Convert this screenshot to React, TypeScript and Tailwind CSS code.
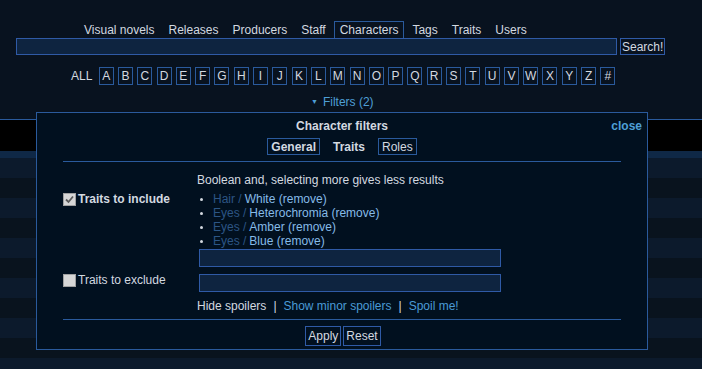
const navItems = ["Visual novels", "Releases", "Producers", "Staff", "Characters", "Tags", "Traits", "Users"];
const letters = "ABCDEFGHIJKLMNOPQRSTUVWXYZ#".split("");
const traits = [
  { group: "Hair", name: "White" },
  { group: "Eyes", name: "Heterochromia" },
  { group: "Eyes", name: "Amber" },
  { group: "Eyes", name: "Blue" },
];

function Check({ checked }: { checked?: boolean }) {
  return (
    <span className="w-[13px] h-[13px] mr-[2px] bg-[#d6d6d6] border border-[#a0a0a0] inline-flex items-center justify-center">
      {checked && (
        <svg width="9" height="9" viewBox="0 0 9 9">
          <path d="M1 4.5 L3.5 7 L8 1.5" stroke="#5a5a5a" strokeWidth="1.8" fill="none" />
        </svg>
      )}
    </span>
  );
}

export default function App() {
  return (
    <div className="relative w-[702px] h-[369px] overflow-hidden bg-[#08121f] text-[#d3d9e0] text-[12px] leading-[14px] font-['Liberation_Sans',Arial,sans-serif]">
      {/* top nav */}
      <div className="pt-[21px] pl-[78px] flex gap-[2px]">
        {navItems.map((n) => (
          <span
            key={n}
            className={
              "h-[18px] px-[5px] flex items-center border " +
              (n === "Characters" ? "border-[#2a5a9c]" : "border-transparent")
            }
          >
            {n}
          </span>
        ))}
      </div>

      {/* search */}
      <div className="flex pl-[16px] gap-[3px] -mt-[1px]">
        <div className="w-[601px] h-[17px] bg-[#0e2440] border border-[#2f5aa6]" />
        <span className="h-[17px] px-[1px] flex items-center border border-[#2f5aa6] text-[12px]">Search!</span>
      </div>

      {/* letters */}
      <div className="flex items-center pl-[71px] mt-[12px] gap-[4.3px]">
        <span className="mr-[2px]">ALL</span>
        {letters.map((l) => (
          <span key={l} className="w-[15px] h-[18px] border border-[#2a5a9c] flex items-center justify-center">
            {l}
          </span>
        ))}
      </div>

      {/* filters toggle */}
      <div className="mt-[10px] flex items-center pl-[311px] text-[#4e9fd6]">
        <span className="text-[7px] mr-[5px]">▼</span>
        <span>Filters (2)</span>
      </div>

      {/* results table behind */}
      <div className="mt-[10px] border-t border-[#2a5a9c] h-[32px] bg-black" />
      <div className="h-[7px] bg-[#0f2846]" />
      <div className="flex flex-col">
        {Array.from({ length: 11 }).map((_, i) => (
          <div key={i} className={"h-[20px] " + (i % 2 === 0 ? "bg-[#0c1a2c]" : "bg-[#09131e]")} />
        ))}
      </div>

      {/* filter panel */}
      <div className="absolute left-[36px] top-[112px] w-[612px] h-[238px] bg-[#01101f] border border-[#2a5a9c] px-[26px]">
        <div className="relative text-center font-bold pt-[6px]">
          Character filters
          <span className="absolute right-[-21px] top-[6px] text-[#4e9fd6]">close</span>
        </div>
        <div className="flex justify-center gap-[6px] mt-[5px] font-bold">
          <span className="h-[17px] px-[3px] flex items-center border border-[#2a5a9c]">General</span>
          <span className="h-[17px] px-[6px] flex items-center border border-transparent">Traits</span>
          <span className="h-[17px] px-[3px] flex items-center border border-[#2a5a9c] font-normal">Roles</span>
        </div>
        <div className="mt-[6px] border-t border-[#2a5a9c]" />

        <div className="flex mt-[11px]">
          <div className="w-[134px] flex flex-col">
            <div className="h-[14px]" />
            <div className="flex items-center font-bold h-[14px] mt-[5px]">
              <Check checked />
              Traits to include
            </div>
            <div className="flex items-center h-[14px] mt-[67px]">
              <Check />
              Traits to exclude
            </div>
          </div>
          <div className="flex flex-col">
            <div>Boolean and, selecting more gives less results</div>
            <ul className="mt-[5px] pl-[3px]">
              {traits.map((t) => (
                <li key={t.name} className="flex items-center h-[14px]">
                  <span className="w-[3px] h-[3px] rounded-full bg-[#d3d9e0] mr-[10px]" />
                  <span className="text-[#2c5585]">{t.group} / </span>
                  <span className="text-[#86bbe8] ml-[3px]">{t.name} (remove)</span>
                </li>
              ))}
            </ul>
            <div className="mt-[1px] w-[302px] h-[18px] ml-[2px] bg-[#0e2440] border border-[#2f5aa6]" />
            <div className="mt-[7px] w-[302px] h-[18px] ml-[2px] bg-[#0e2440] border border-[#2f5aa6]" />
            <div className="mt-[7px] flex gap-[7px]">
              <span>Hide spoilers</span>
              <span>|</span>
              <span className="text-[#4a9bd6]">Show minor spoilers</span>
              <span>|</span>
              <span className="text-[#4a9bd6]">Spoil me!</span>
            </div>
          </div>
        </div>

        <div className="mt-[6px] border-t border-[#2a5a9c]" />
        <div className="flex justify-center gap-[2px] mt-[6px] pl-[2px]">
          <span className="h-[20px] px-[2px] flex items-center border border-[#2f5aa6] text-[12px]">Apply</span>
          <span className="h-[20px] px-[2px] flex items-center border border-[#2f5aa6] text-[12px]">Reset</span>
        </div>
      </div>
    </div>
  );
}
